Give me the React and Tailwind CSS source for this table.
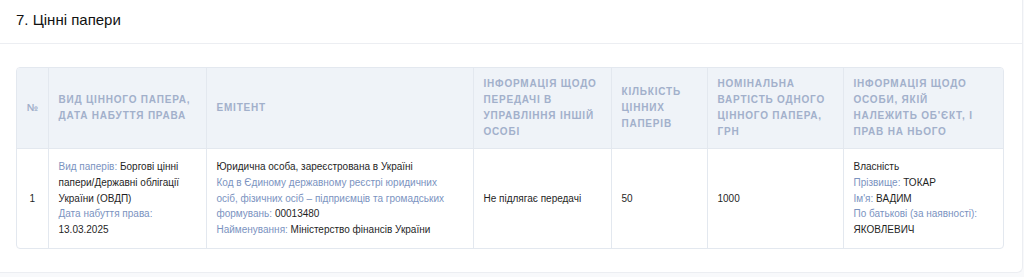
import React from "react";

const L = ({ children }) => <span className="text-[#7b93bf]">{children}</span>;

export default function App() {
  const th = "border-l border-[#e3e8ef] px-[10px] py-2 text-left align-middle text-[10px] font-bold uppercase leading-4 tracking-[0.08em] text-[#a2b0cb]";
  const td = "border-l border-[#e3e8ef] px-[10px] py-[10px] align-middle text-[10px] leading-[15.75px] text-[#1f1f1f]";
  return (
    <div className="h-[277px] w-[1024px] overflow-hidden bg-[#f8f9fb]" style={{ fontFamily: '"Liberation Sans", Arial, sans-serif' }}>
      <div className="w-[1023px] rounded-br-md border-b border-r border-[#eceef2] bg-white">
        <div className="flex h-[44px] items-center border-b border-[#eceef2] px-4 pb-[2px]">
          <h2 className="text-[15px] text-[#111]">7. Цінні папери</h2>
        </div>
        <div className="pb-[23px] pl-4 pr-[18px] pt-[23px]">
          <div className="overflow-hidden rounded-[4px] border border-[#e3e8ef]">
            <table className="w-full table-fixed border-collapse">
              <colgroup>
                <col className="w-[31px]" />
                <col className="w-[158px]" />
                <col className="w-[267px]" />
                <col className="w-[138px]" />
                <col className="w-[96px]" />
                <col className="w-[136px]" />
                <col />
              </colgroup>
              <thead className="bg-[#eff3f8]">
                <tr className="h-[80px]">
                  <th className="px-0 py-2 text-center align-middle text-[10px] font-bold leading-4 text-[#a2b0cb]">№</th>
                  <th className={th}>Вид цінного папера, дата набуття права</th>
                  <th className={th}>Емітент</th>
                  <th className={th}>Інформація щодо передачі в управління іншій особі</th>
                  <th className={th}>Кількість цінних паперів</th>
                  <th className={th}>Номінальна вартість одного цінного папера, грн</th>
                  <th className={th}>Інформація щодо особи, якій належить об'єкт, і прав на нього</th>
                </tr>
              </thead>
              <tbody>
                <tr className="border-t border-[#e3e8ef]">
                  <td className="px-0 py-[10px] text-center align-middle text-[10px] text-[#1f1f1f]">1</td>
                  <td className={td}>
                    <L>Вид паперів:</L> Боргові цінні папери/Державні облігації України (ОВДП)
                    <br />
                    <L>Дата набуття права:</L>
                    <br />
                    13.03.2025
                  </td>
                  <td className={`${td} pr-[25px]`}>
                    Юридична особа, зареєстрована в Україні
                    <br />
                    <L>Код в Єдиному державному реєстрі юридичних осіб, фізичних осіб – підприємців та громадських формувань:</L> 00013480
                    <br />
                    <L>Найменування:</L> Міністерство фінансів України
                  </td>
                  <td className={td}>Не підлягає передачі</td>
                  <td className={td}>50</td>
                  <td className={td}>1000</td>
                  <td className={td}>
                    Власність
                    <br />
                    <L>Прізвище:</L> ТОКАР
                    <br />
                    <L>Ім'я:</L> ВАДИМ
                    <br />
                    <L>По батькові (за наявності):</L> ЯКОВЛЕВИЧ
                  </td>
                </tr>
              </tbody>
            </table>
          </div>
        </div>
      </div>
    </div>
  );
}
